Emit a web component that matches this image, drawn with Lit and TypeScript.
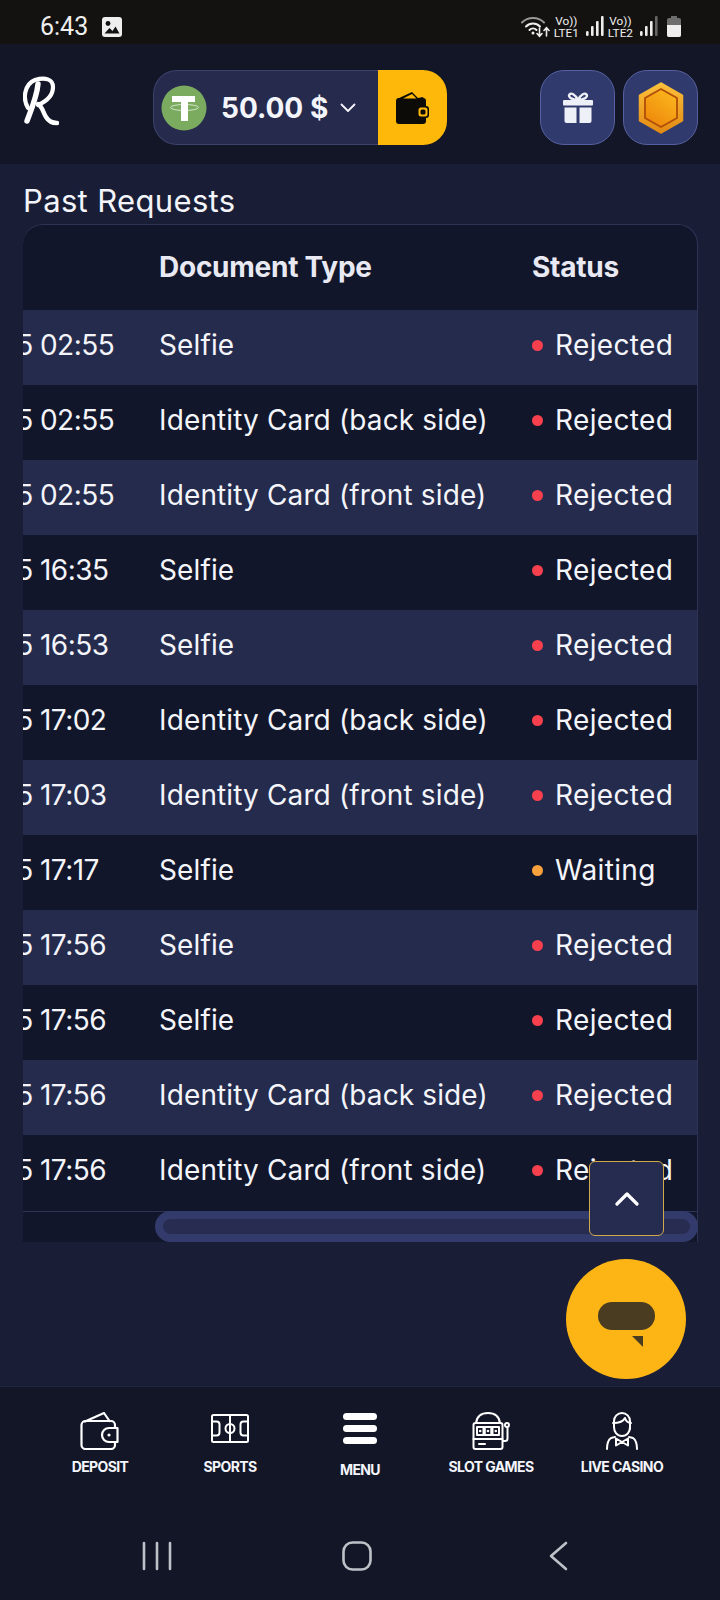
import { LitElement, css, html, svg } from 'lit';
import { customElement } from 'lit/decorators.js';

// rows of the requests table, in the order they are listed.
// the table is scrolled to its right end, only the last digit of the day shows
const rows = [
  ['5', '02:55', 'Selfie', 'Rejected'],
  ['5', '02:55', 'Identity Card (back side)', 'Rejected'],
  ['5', '02:55', 'Identity Card (front side)', 'Rejected'],
  ['5', '16:35', 'Selfie', 'Rejected'],
  ['5', '16:53', 'Selfie', 'Rejected'],
  ['5', '17:02', 'Identity Card (back side)', 'Rejected'],
  ['5', '17:03', 'Identity Card (front side)', 'Rejected'],
  ['5', '17:17', 'Selfie', 'Waiting'],
  ['5', '17:56', 'Selfie', 'Rejected'],
  ['5', '17:56', 'Selfie', 'Rejected'],
  ['5', '17:56', 'Identity Card (back side)', 'Rejected'],
  ['5', '17:56', 'Identity Card (front side)', 'Rejected'],
];

const bars = (n: number) => svg`
  <svg width="18" height="21" viewBox="0 0 18 21">
    <g fill="#eeeeee">
      <rect x="0" y="15" width="2.6" height="5" rx="1.2"/>
      <rect x="5" y="10" width="2.6" height="10" rx="1"/>
      <rect x="10" y="5" width="2.6" height="15" rx="1"/>
      <rect x="15" y="0" width="2.6" height="20" rx="1" fill=${n === 4 ? '#eeeeee' : '#666666'}/>
    </g>
  </svg>`;

const navItems = [
  {
    label: 'DEPOSIT',
    icon: svg`<svg width="40" height="38" viewBox="0 0 40 38" fill="none" stroke="#fff" stroke-width="2.2" stroke-linejoin="round" stroke-linecap="round">
      <path d="M35 16V13a4 4 0 0 0-4-4H5.500A4 4 0 0 0 1.500 13v20a4 4 0 0 0 4 4H31a4 4 0 0 0 4-4v-3"/>
      <path d="M5 9.500 24 1l5.500 8"/>
      <path d="M37.500 16H29a6.500 6.500 0 0 0 0 14h8.500z"/>
      <circle cx="29" cy="23" r="1.600" fill="#fff" stroke="none"/>
    </svg>`,
  },
  {
    label: 'SPORTS',
    icon: svg`<svg width="38" height="38" viewBox="0 0 38 38" fill="none" stroke="#fff" stroke-width="2">
      <rect x="1" y="3" width="36" height="27" rx="1.500"/>
      <path d="M19 3v27"/>
      <circle cx="19" cy="16.500" r="4.500"/>
      <path d="M1 9.500h4.500a3 3 0 0 1 3 3v8a3 3 0 0 1-3 3H1"/>
      <path d="M37 9.500h-4.500a3 3 0 0 0-3 3v8a3 3 0 0 0 3 3H37"/>
    </svg>`,
  },
  {
    label: 'MENU',
    menu: true,
    icon: svg`<svg width="36" height="38" viewBox="0 0 36 38" fill="#fff">
      <rect x="1" y="0" width="34" height="7" rx="3.500"/>
      <rect x="1" y="12" width="34" height="7" rx="3.500"/>
      <rect x="1" y="24" width="34" height="7" rx="3.500"/>
    </svg>`,
  },
  {
    label: 'SLOT GAMES',
    icon: svg`<svg width="38" height="38" viewBox="0 0 38 38" fill="none" stroke="#fff" stroke-width="2" stroke-linejoin="round" stroke-linecap="round">
      <path d="M4 11C5 4 10 1 16 1s11 3 12 10"/>
      <rect x="1.500" y="11" width="29" height="26" rx="2"/>
      <path d="M1.500 27h29"/>
      <rect x="5" y="15" width="6.500" height="8"/>
      <rect x="12.800" y="15" width="6.500" height="8"/>
      <rect x="20.500" y="15" width="6.500" height="8"/>
      <path d="M7 32h6"/>
      <path d="M31 29h2a2.500 2.500 0 0 0 2.500-2.500V16"/>
      <circle cx="35" cy="13" r="2"/>
      <g fill="#fff" stroke="none"><circle cx="8.200" cy="19" r="1.300"/><circle cx="16" cy="19" r="1.300"/><circle cx="23.800" cy="19" r="1.300"/></g>
    </svg>`,
  },
  {
    label: 'LIVE CASINO',
    icon: svg`<svg width="34" height="38" viewBox="0 0 34 38" fill="none" stroke="#fff" stroke-width="2" stroke-linejoin="round" stroke-linecap="round">
      <path d="M9 15V9a8 8 0 0 1 16 0v8"/>
      <path d="M8 11c6 0 10-1 12-5 1 3 3 5 6 5"/>
      <path d="M9 15c0 5 3 9 8 9s8-4 8-9"/>
      <path d="M2 37c0-6 1-9 4-11l4-1"/>
      <path d="M32 37c0-6-1-9-4-11l-4-1"/>
      <path d="M17 30l-6-3.500v7zM17 30l6-3.500v7z"/>
    </svg>`,
  },
];

@customElement('app-root')
export class AppRoot extends LitElement {
  static styles = css`
    :host {
      display: block;
      width: 720px;
      height: 1600px;
      overflow: hidden;
      font-family: 'Inter', 'Liberation Sans', sans-serif;
      color: #f4f5fa;
      background: #191e36;
    }
    .page {
      display: flex;
      flex-direction: column;
      height: 100%;
    }

    /* status bar */
    .status {
      height: 44px;
      flex: none;
      background: #141211;
      display: flex;
      align-items: center;
      justify-content: space-between;
      padding: 9px 39px 0 40px;
      box-sizing: border-box;
      color: #eeeeee;
      font-family: 'Roboto', sans-serif;
    }
    .status-left {
      display: flex;
      align-items: center;
      gap: 14px;
      font-size: 25px;
    }
    .status-right {
      display: flex;
      align-items: center;
    }
    .sim {
      display: flex;
      flex-direction: column;
      align-items: center;
      font-size: 11.800px;
      line-height: 12px;
      margin: 0 7px 0 4px;
    }
    .battery {
      margin-left: 9px;
    }

    /* top header */
    .top {
      height: 120px;
      flex: none;
      background: #121627;
      display: flex;
      align-items: center;
      padding: 7px 22px 0 23px;
      box-sizing: border-box;
    }
    .logo {
      width: 130px;
      flex: none;
      margin-bottom: 9px;
    }
    .balance {
      display: flex;
      height: 75px;
      width: 294px;
      flex: none;
      box-sizing: border-box;
    }
    .amount {
      flex: 1;
      display: flex;
      align-items: center;
      background: #262b4e;
      border: 1px solid #3c4268;
      border-right: none;
      border-radius: 24px 0 0 24px;
      padding-left: 7px;
      font-weight: 700;
      font-size: 28px;
    }
    .amount span {
      margin-left: 14px;
      margin-right: 12px;
    }
    .wallet {
      width: 69px;
      background: #fdb80a;
      border-radius: 0 24px 24px 0;
      display: flex;
      align-items: center;
      justify-content: center;
    }
    .top-actions {
      margin-left: auto;
      display: flex;
      gap: 8px;
    }
    .square {
      width: 75px;
      height: 75px;
      box-sizing: border-box;
      border-radius: 24px;
      background: #303a6c;
      border: 1px solid #5560a0;
      display: flex;
      align-items: center;
      justify-content: center;
    }

    /* requests */
    .main {
      flex: 1;
      position: relative;
      padding: 0 22px 0 23px;
    }
    h2 {
      margin: 0;
      height: 60px;
      font-weight: 400;
      font-size: 31px;
      line-height: 73px;
      letter-spacing: 0.35px;
    }
    .table-box {
      border-top: 1px solid #2e3355;
      border-right: 1px solid #2e3355;
      border-radius: 20px 20px 0 0;
      background: #12162a;
    }
    .scroller {
      overflow: hidden;
      height: 986px;
      border-radius: 19px 19px 0 0;
    }
    .table {
      width: 839px;
      margin-left: -164px;
    }
    .row {
      display: grid;
      grid-template-columns: 300px 373px 166px;
      height: 75px;
      align-items: center;
      font-size: 28px;
      letter-spacing: 0.13px;
      white-space: nowrap;
      padding-bottom: 5px;
      box-sizing: border-box;
    }
    .row.head {
      height: 85px;
      padding-bottom: 1px;
      font-weight: 700;
      letter-spacing: -0.25px;
      color: #e8e9f2;
    }
    .row.odd {
      background: #252b4d;
    }
    .when {
      letter-spacing: -0.55px;
    }
    .day {
      display: inline-block;
      width: 181px;
      text-align: right;
    }
    .state {
      display: flex;
      align-items: center;
      gap: 12px;
      letter-spacing: 0.35px;
    }
    .dot {
      width: 11px;
      height: 11px;
      border-radius: 50%;
      background: #f7404e;
      flex: none;
    }
    .dot.wait {
      background: #f9a13c;
    }
    .track {
      height: 31px;
      background: #12162a;
      border-radius: 0 0 0 16px;
      display: flex;
      justify-content: flex-end;
      border-top: 1px solid #2e3355;
      box-sizing: border-box;
    }
    .thumb {
      width: 543px;
      height: 31px;
      flex: none;
      margin-top: -1px;
      margin-right: -1px;
      box-sizing: border-box;
      background: #272c50;
      border: 8px solid #323b6c;
      border-radius: 16px;
    }
    .up {
      position: absolute;
      left: 589px;
      top: 997px;
      width: 75px;
      height: 75px;
      box-sizing: border-box;
      background: #262c50;
      border: 1px solid #d0a94a;
      border-radius: 6px;
      display: flex;
      align-items: center;
      justify-content: center;
    }
    .chat {
      position: absolute;
      left: 566px;
      top: 1095px;
      width: 120px;
      height: 120px;
      border-radius: 50%;
      background: #fdb515;
    }
    .chat svg {
      display: block;
    }

    /* bottom nav */
    .nav {
      height: 214px;
      flex: none;
      background: #121627;
      border-top: 1px solid #1f2440;
      box-sizing: border-box;
    }
    .tabs {
      display: grid;
      grid-template-columns: 130px 130px 130px 132px 130px;
      padding: 25px 0 0 35px;
      height: 118px;
      box-sizing: border-box;
    }
    .tab {
      display: flex;
      flex-direction: column;
      align-items: center;
      gap: 8px;
      font-size: 14px;
      font-weight: 700;
      letter-spacing: -0.6px;
      white-space: nowrap;
    }
    .tab.menu {
      padding-top: 1px;
      gap: 10px;
    }
    .tab svg {
      display: block;
    }
    .sysnav {
      display: flex;
      align-items: center;
      height: 96px;
      padding: 6px 0 0 142px;
      box-sizing: border-box;
    }
    .sysnav svg {
      flex: none;
    }
    .sysnav .home {
      margin-left: 170px;
    }
    .sysnav .back {
      margin-left: 177px;
    }
  `;

  render() {
    return html`
      <div class="page">
        <div class="status">
          <div class="status-left">
            <span>6:43</span>
            <svg width="20" height="20" viewBox="0 0 20 20">
              <rect width="20" height="20" rx="3" fill="#eeeeee"/>
              <circle cx="6" cy="6.500" r="2.400" fill="#141211"/>
              <path d="M2.500 16.500 7.500 11l3 3 3-4.500 4 7z" fill="#141211"/>
            </svg>
          </div>
          <div class="status-right">
            <svg width="29" height="22" viewBox="0 0 29 22" fill="none" stroke-linecap="round">
              <path d="M1 6.500C7 .5 17 .5 23 6.500" stroke="#999" stroke-width="2"/>
              <path d="M5 10.500c4-4 10-4 14 0" stroke="#eee" stroke-width="2"/>
              <path d="M8.500 14c2-2 5-2 7 0" stroke="#eee" stroke-width="2"/>
              <circle cx="12" cy="17" r="1.500" fill="#eee"/>
              <path d="M18.500 12v8m-2.500-2.500 2.500 2.800 2.500-2.800M25.500 20v-8m-2.500 2.500 2.500-2.800 2.500 2.800" stroke="#eee" stroke-width="1.600"/>
            </svg>
            <div class="sim"><span>Vo))</span><span>LTE1</span></div>
            ${bars(4)}
            <div class="sim"><span>Vo))</span><span>LTE2</span></div>
            ${bars(3)}
            <svg class="battery" width="14" height="21" viewBox="0 0 14 21">
              <path d="M4 0h6v2h2a2 2 0 0 1 2 2v15a2 2 0 0 1-2 2H2a2 2 0 0 1-2-2V4a2 2 0 0 1 2-2h2z" fill="#6d6d6d"/>
              <path d="M0 9h14v10a2 2 0 0 1-2 2H2a2 2 0 0 1-2-2z" fill="#eeeeee"/>
            </svg>
          </div>
        </div>

        <div class="top">
          <div class="logo">
            <svg width="36" height="50" viewBox="0 0 36 50" fill="none" stroke="#fff" stroke-linecap="round" stroke-linejoin="round">
              <path d="M5 32C-1 22 2 8 12 4c10-3 18-1 18 7 0 9-8 15-15 18" stroke-width="4.200"/>
              <path d="M15 8c-1 12-6 24-11 37" stroke-width="5.400"/>
              <path d="M15 28c4 2 5 8 8 13 3 5 7 6 11 6" stroke-width="4.400"/>
            </svg>
          </div>
          <div class="balance">
            <div class="amount">
              <svg width="46" height="46" viewBox="0 0 46 46">
                <circle cx="23" cy="23" r="22.500" fill="#7aab5f"/>
                <path d="M11 11h23v6h-7v19h-7V17h-9z" fill="#fff"/>
                <ellipse cx="23.500" cy="22.500" rx="14" ry="3" fill="none" stroke="#fff" stroke-opacity="0.75" stroke-width="0.900"/>
              </svg>
              <span>50.00 $</span>
              <svg width="16" height="10" viewBox="0 0 16 10" fill="none" stroke="#f4f5fa" stroke-width="1.800" stroke-linecap="round" stroke-linejoin="round">
                <path d="M1.500 1.500 8 8l6.500-6.500"/>
              </svg>
            </div>
            <div class="wallet">
              <svg width="34" height="32" viewBox="0 0 34 32">
                <path d="M1 7 16 0l6 6 5-1 1 3H1z" fill="#0d0b08"/>
                <rect x="0" y="6" width="30" height="26" rx="3" fill="#0d0b08"/>
                <path d="M7 6.500 16 2l4.500 4.500z" fill="#fdb80a"/>
                <rect x="21" y="14" width="12" height="12" rx="3" fill="#0d0b08"/>
                <rect x="22.500" y="15.500" width="9" height="9" rx="2.500" fill="#fdb80a"/>
                <rect x="24.500" y="17.500" width="5" height="5" rx="1.500" fill="#0d0b08"/>
              </svg>
            </div>
          </div>
          <div class="top-actions">
            <div class="square">
              <svg width="30" height="31" viewBox="0 0 30 31">
                <g fill="none" stroke="#eef0f8" stroke-width="2.400">
                  <path d="M15 8C12 2 8 .5 6.500 2.500S8 8 15 8zM15 8c3-6 7-7.500 8.500-5.500S22 8 15 8z"/>
                </g>
                <g fill="#eef0f8">
                  <rect x="0" y="8" width="30" height="5.500" rx="1"/>
                  <path d="M1.500 15.500h12V31H3.500a2 2 0 0 1-2-2zM16.500 15.500h12V29a2 2 0 0 1-2 2h-10z"/>
                </g>
              </svg>
            </div>
            <div class="square">
              <svg width="46" height="52" viewBox="0 0 46 52">
                <defs>
                  <linearGradient id="hexrim" x1="0" y1="0" x2="0" y2="1">
                    <stop offset="0" stop-color="#fbc03a"/>
                    <stop offset="1" stop-color="#e28a14"/>
                  </linearGradient>
                  <linearGradient id="hexfill" x1="0.800" y1="0" x2="0.200" y2="1">
                    <stop offset="0" stop-color="#fbb81e"/>
                    <stop offset="1" stop-color="#ee860a"/>
                  </linearGradient>
                </defs>
                <path d="M23 1.500 44 13.500v25L23 50.500 2 38.500v-25z" fill="url(#hexrim)" stroke="url(#hexrim)" stroke-width="2.500" stroke-linejoin="round"/>
                <path d="M23 7 39 16v20L23 45 7 36V16z" fill="url(#hexfill)" stroke="#b04d08" stroke-width="1.800" stroke-linejoin="round"/>
              </svg>
            </div>
          </div>
        </div>

        <div class="main">
          <h2>Past Requests</h2>
          <div class="table-box">
            <div class="scroller">
              <div class="table">
                <div class="row head">
                  <span></span>
                  <span>Document Type</span>
                  <span>Status</span>
                </div>
                ${rows.map(
                  (r, i) => html`
                    <div class="row ${i % 2 === 0 ? 'odd' : ''}">
                      <span class="when"><span class="day">${r[0]}&nbsp;</span>${r[1]}</span>
                      <span>${r[2]}</span>
                      <span class="state">
                        <i class="dot ${r[3] === 'Waiting' ? 'wait' : ''}"></i>${r[3]}
                      </span>
                    </div>
                  `,
                )}
              </div>
            </div>
            <div class="track"><div class="thumb"></div></div>
          </div>
          <div class="up">
            <svg width="24" height="15" viewBox="0 0 24 15" fill="none" stroke="#fff" stroke-width="3.200" stroke-linecap="round" stroke-linejoin="round">
              <path d="M2 13 12 3l10 10"/>
            </svg>
          </div>
          <div class="chat">
            <svg width="120" height="120" viewBox="0 0 120 120">
              <rect x="32" y="43" width="57" height="28" rx="14" fill="#4a3c20"/>
              <path d="M66 77h11v11z" fill="#4a3c20"/>
            </svg>
          </div>
        </div>

        <div class="nav">
          <div class="tabs">
            ${navItems.map(
              (n) => html`<div class="tab ${n.menu ? 'menu' : ''}">${n.icon}<span>${n.label}</span></div>`,
            )}
          </div>
          <div class="sysnav">
            <svg width="30" height="30" viewBox="0 0 30 30" stroke="#bfc1c9" stroke-width="2.600" stroke-linecap="round">
              <path d="M2 2v26M15 2v26M28 2v26"/>
            </svg>
            <svg class="home" width="30" height="30" viewBox="0 0 30 30" fill="none" stroke="#bfc1c9" stroke-width="2.600">
              <rect x="1.500" y="1.500" width="27" height="27" rx="9"/>
            </svg>
            <svg class="back" width="20" height="30" viewBox="0 0 20 30" fill="none" stroke="#bfc1c9" stroke-width="2.600" stroke-linecap="round" stroke-linejoin="round">
              <path d="M17 2 2 15l15 13"/>
            </svg>
          </div>
        </div>
      </div>
    `;
  }
}
